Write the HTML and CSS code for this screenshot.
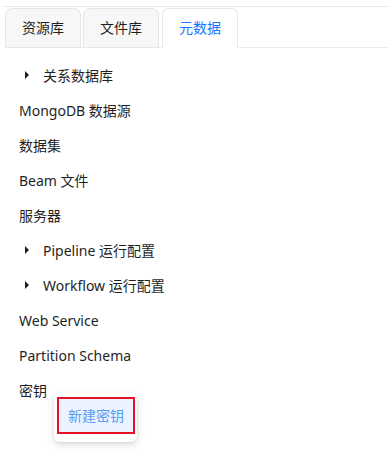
FILE: index.html
```html
<!DOCTYPE html>
<html lang="zh">
<head>
    <meta charset="UTF-8">
    <meta name="viewport" content="width=device-width, initial-scale=1.0">
    <title>元数据</title>
    <link rel="stylesheet" href="styles.css">
</head>
<body>
    <div class="panel">
        <div class="tabs">
            <div class="tab">资源库</div>
            <div class="tab">文件库</div>
            <div class="tab active">元数据</div>
        </div>
        <ul class="tree">
            <li class="node"><span class="caret"></span>关系数据库</li>
            <li class="node leaf">MongoDB 数据源</li>
            <li class="node leaf">数据集</li>
            <li class="node leaf">Beam 文件</li>
            <li class="node leaf">服务器</li>
            <li class="node"><span class="caret"></span>Pipeline 运行配置</li>
            <li class="node"><span class="caret"></span>Workflow 运行配置</li>
            <li class="node leaf">Web Service</li>
            <li class="node leaf">Partition Schema</li>
            <li class="node leaf menu-anchor">密钥
                <div class="context-menu">
                    <div class="menu-item">新建密钥</div>
                </div>
            </li>
        </ul>
    </div>
</body>
</html>
```

FILE: styles.css
```css
html, body {
    height: 100%;
}

body {
    margin: 0;
    font-family: "Noto Sans", "Noto Sans CJK SC", sans-serif;
    font-size: 14px;
    color: #1f1f1f;
    background-color: white;
    min-height: 453px;
}

.panel {
    padding-top: 1px;
    border-top: 1px solid #e8e8e8;
    margin-top: 6px;
    margin-left: 3px;
}

.tabs {
    display: flex;
    gap: 2px;
    margin-left: 2px;
    border-bottom: 1px solid #ececec;
    height: 39px;
}

.tab {
    box-sizing: border-box;
    width: 76px;
    height: 40px;
    display: flex;
    align-items: center;
    justify-content: center;
    background-color: #f7f7f7;
    border: 1px solid #e6e6e6;
    border-radius: 7px 7px 0 0;
    padding-bottom: 2px;
}

.tab.active {
    background-color: white;
    color: #1677ff;
    border-bottom-color: white;
    margin-left: 1px;
}

.tree {
    list-style: none;
    margin: 9px 0 0;
    padding: 0;
}

.node {
    height: 35.1px;
    display: flex;
    align-items: center;
    padding-left: 22px;
}

.node.leaf {
    padding-left: 16px;
}

.caret {
    width: 0;
    height: 0;
    border-top: 4px solid transparent;
    border-bottom: 4px solid transparent;
    border-left: 4px solid #1f1f1f;
    margin-right: 14px;
}

.menu-anchor {
    position: relative;
}

.context-menu {
    position: absolute;
    left: 51px;
    top: 20px;
    width: 83px;
    padding: 4px 0 8px;
    background-color: white;
    border-radius: 6px;
    box-shadow: 0 3px 8px rgba(0,0,0,0.12), 0 1px 3px rgba(0,0,0,0.08);
}

.menu-item {
    margin: 0 2px 0 3px;
    height: 37px;
    box-sizing: border-box;
    display: flex;
    align-items: center;
    justify-content: center;
    background-color: #eaf3ff;
    color: #5b9bf5;
    border: 2px solid #e81123;
}
```
